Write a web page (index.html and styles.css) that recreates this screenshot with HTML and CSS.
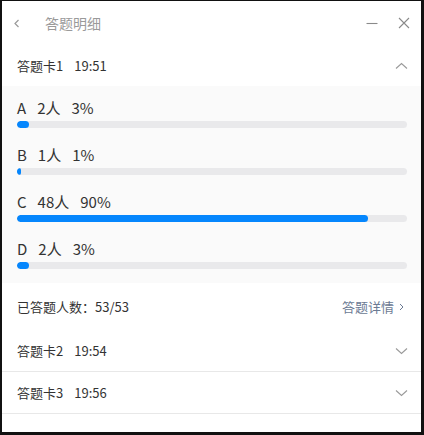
FILE: index.html
```html
<!DOCTYPE html>
<html lang="zh">
<head>
<meta charset="utf-8">
<link rel="stylesheet" href="styles.css">
</head>
<body>
<div class="window">
  <div class="titlebar">
    <svg class="back" width="7" height="9" viewBox="0 0 7 9"><path d="M5.5 1 L2 4.5 L5.5 8" fill="none" stroke="#9a9a9a" stroke-width="1.2"/></svg>
    <div class="title">答题明细</div>
    <svg class="min" width="12" height="12" viewBox="0 0 12 12"><path d="M0.5 6.5 H11.5" stroke="#8a8a8a" stroke-width="1.1"/></svg>
    <svg class="close" width="12" height="12" viewBox="0 0 12 12"><path d="M1 1 L11 11 M11 1 L1 11" stroke="#8a8a8a" stroke-width="1.1"/></svg>
  </div>

  <div class="card-head">
    <div class="card-name"><span>答题卡1</span><span>19:51</span></div>
    <svg class="chev" width="13" height="8" viewBox="0 0 13 8"><path d="M1 6.5 L6.5 1.5 L12 6.5" fill="none" stroke="#9a9a9a" stroke-width="1.1"/></svg>
  </div>

  <div class="panel">
    <div class="option">
      <div class="opt-label"><span>A</span><span>2人</span><span>3%</span></div>
      <div class="track"><div class="fill" style="width:3%"></div></div>
    </div>
    <div class="option">
      <div class="opt-label"><span>B</span><span>1人</span><span>1%</span></div>
      <div class="track"><div class="fill" style="width:1%"></div></div>
    </div>
    <div class="option">
      <div class="opt-label"><span>C</span><span>48人</span><span>90%</span></div>
      <div class="track"><div class="fill" style="width:90%"></div></div>
    </div>
    <div class="option">
      <div class="opt-label"><span>D</span><span>2人</span><span>3%</span></div>
      <div class="track"><div class="fill" style="width:3%"></div></div>
    </div>
  </div>

  <div class="summary">
    <div class="count">已答题人数：53/53</div>
    <div class="detail">答题详情<svg width="5" height="8" viewBox="0 0 5 8"><path d="M1 1 L4 4 L1 7" fill="none" stroke="#6b7a93" stroke-width="1"/></svg></div>
  </div>

  <div class="card-head bordered">
    <div class="card-name"><span>答题卡2</span><span>19:54</span></div>
    <svg class="chev" width="13" height="8" viewBox="0 0 13 8"><path d="M1 1.5 L6.5 6.5 L12 1.5" fill="none" stroke="#9a9a9a" stroke-width="1.1"/></svg>
  </div>
  <div class="card-head bordered">
    <div class="card-name"><span>答题卡3</span><span>19:56</span></div>
    <svg class="chev" width="13" height="8" viewBox="0 0 13 8"><path d="M1 1.5 L6.5 6.5 L12 1.5" fill="none" stroke="#9a9a9a" stroke-width="1.1"/></svg>
  </div>
</div>
</body>
</html>
```

FILE: styles.css
```css
* { box-sizing: border-box; }
html, body { margin: 0; padding: 0; background: #fff; }
body {
  font-family: "Noto Sans CJK SC", "Noto Sans", sans-serif;
  color: #333;
}
.window {
  width: 424px;
  height: 435px;
  border-style: solid;
  border-color: #111;
  border-width: 1px 3px 3px 2px;
  background: #fff;
  overflow: hidden;
}
.titlebar {
  height: 44px;
  display: flex;
  align-items: center;
  padding: 0 11px 0 11px;
}
.titlebar .back { margin-right: 25px; }
.titlebar .title {
  flex: 1;
  font-size: 14px;
  color: #9a9a9a;
  line-height: 20px;
}
.titlebar .min { margin-right: 20px; }
.card-head {
  height: 41px;
  display: flex;
  align-items: center;
  justify-content: space-between;
  padding: 0 13px 0 15px;
}
.card-head.bordered {
  height: 42px;
  border-bottom: 1px solid #e8e8e8;
}
.card-name {
  display: flex;
  gap: 11px;
  font-size: 13px;
  line-height: 18px;
  color: #333;
}
.panel {
  background: #fafafa;
  padding: 12px 14px 14px 15px;
  display: flex;
  flex-direction: column;
  gap: 17px;
}
.opt-label {
  display: flex;
  gap: 11px;
  font-size: 15px;
  line-height: 20px;
  color: #333;
  margin-bottom: 3px;
}
.track {
  height: 7px;
  border-radius: 4px;
  background: #e9e9eb;
  overflow: hidden;
}
.fill {
  height: 100%;
  border-radius: 4px;
  background: #0586fd;
  min-width: 4px;
}
.summary {
  height: 47px;
  display: flex;
  align-items: center;
  justify-content: space-between;
  padding: 0 17px 0 15px;
  font-size: 13px;
  line-height: 18px;
}
.detail {
  display: flex;
  align-items: center;
  gap: 5px;
  color: #6b7a93;
}
```
